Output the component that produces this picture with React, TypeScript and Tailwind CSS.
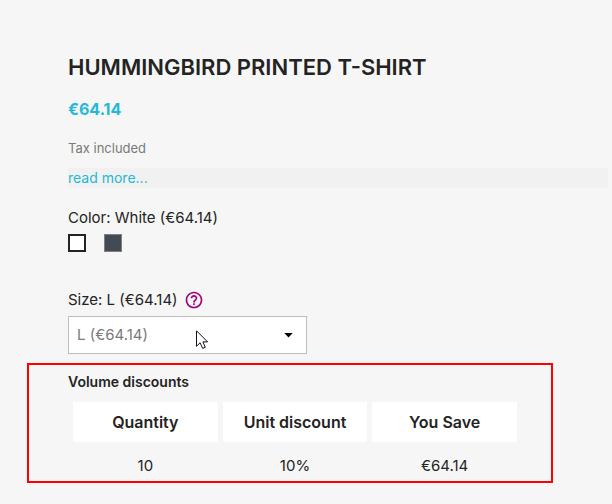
import { useState } from "react";

const colors = [
  { name: "White", swatch: "bg-white" },
  { name: "Black", swatch: "bg-[#434a54]" },
];

const discounts = [{ quantity: "10", discount: "10%", save: "€64.14" }];

export default function App() {
  const [color, setColor] = useState("White");
  const [size, setSize] = useState("L");

  return (
    <main className="min-h-screen bg-[#f6f6f6] pt-[53px] pb-5 font-['Inter','Liberation_Sans',sans-serif] text-[#232323]">
      <div className="pl-[68px] pr-1">
        <h1 className="text-[22px] leading-7 font-semibold uppercase">
          Hummingbird printed t-shirt
        </h1>

        {/* PRICE */}
        <p className="mt-4 text-base leading-6 font-bold text-[#24b9d7]">€64.14</p>
        <p className="mt-[17px] text-[13px] leading-5 text-[#7a7a7a]">Tax included</p>
        <div className="mt-[10px] bg-[#f1f1f1] text-sm leading-5">
          <a href="#more" className="text-[#24b9d7]">
            read more...
          </a>
        </div>

        {/* COLOR */}
        <fieldset className="mt-[18px]">
          <legend className="text-[15px] leading-6">Color: {color} (€64.14)</legend>
          <div className="mt-1 flex gap-[18px]">
            {colors.map((c) => (
              <input
                key={c.name}
                type="radio"
                name="color"
                aria-label={c.name}
                checked={color === c.name}
                onChange={() => setColor(c.name)}
                className={`size-[18px] appearance-none border border-[#808080] checked:border-2 checked:border-[#232323] ${c.swatch}`}
              />
            ))}
          </div>
        </fieldset>

        {/* SIZE */}
        <div className="mt-9 flex items-center gap-[6px]">
          <label htmlFor="size" className="text-[15px] leading-6">
            Size: {size} (€64.14)
          </label>
          <button type="button" aria-label="Size help" className="text-[#a4007c]">
            <HelpIcon />
          </button>
        </div>
        <div className="relative mt-1 w-[239px]">
          <select
            id="size"
            value={size}
            onChange={(e) => setSize(e.target.value)}
            className="block h-[38px] w-full appearance-none border border-[#bdbdbd] bg-white px-2 text-[15px] text-[#7a7a7a]"
          >
            <option value="S">S (€64.14)</option>
            <option value="M">M (€64.14)</option>
            <option value="L">L (€64.14)</option>
            <option value="XL">XL (€64.14)</option>
          </select>
          <svg
            className="pointer-events-none absolute top-[17px] right-[14px]"
            width="9"
            height="5"
            viewBox="0 0 9 5"
            aria-hidden="true"
          >
            <path d="M0.3 0H8.7L4.5 4.6Z" fill="#000" />
          </svg>
          <Cursor />
        </div>
      </div>

      {/* VOLUME DISCOUNTS */}
      <section className="mt-[9px] mr-[59px] ml-[27px] border-2 border-[#f00] pt-[5px] pr-[29px] pl-[39px]">
        <h2 className="text-sm leading-6 font-semibold">Volume discounts</h2>
        <table className="mt-[3px] w-full table-fixed border-separate border-spacing-[5px] text-center text-[15px] leading-5">
          <thead className="text-base leading-5">
            <tr>
              <th className="bg-white py-[10px] font-semibold">Quantity</th>
              <th className="bg-white py-[10px] font-semibold">Unit discount</th>
              <th className="bg-white py-[10px] font-semibold">You Save</th>
            </tr>
          </thead>
          <tbody>
            {discounts.map((d) => (
              <tr key={d.quantity}>
                <td className="pt-[9px]">{d.quantity}</td>
                <td className="pt-[9px]">{d.discount}</td>
                <td className="pt-[9px]">{d.save}</td>
              </tr>
            ))}
          </tbody>
        </table>
      </section>
    </main>
  );
}

function HelpIcon() {
  return (
    <svg className="block" width="20" height="20" viewBox="0 0 24 24" fill="currentColor" aria-hidden="true">
      <path d="M11 18h2v-2h-2v2zm1-16C6.48 2 2 6.48 2 12s4.48 10 10 10 10-4.48 10-10S17.52 2 12 2zm0 18c-4.41 0-8-3.59-8-8s3.59-8 8-8 8 3.59 8 8-3.59 8-8 8zm0-14c-2.21 0-4 1.79-4 4h2c0-1.1.9-2 2-2s2 .9 2 2c0 2-3 1.75-3 5h2c0-2.25 3-2.5 3-5 0-2.21-1.79-4-4-4z" />
    </svg>
  );
}

function Cursor() {
  return (
    <svg
      className="pointer-events-none absolute top-[14px] left-32"
      width="13"
      height="20"
      viewBox="0 0 13 20"
      aria-hidden="true"
    >
      <path
        d="M0.5 0.8V16.3L4.1 12.8L6.7 18.4L9.3 17.3L6.9 11.9H11.6Z"
        fill="#fff"
        stroke="#111122"
        strokeWidth="1"
      />
    </svg>
  );
}
